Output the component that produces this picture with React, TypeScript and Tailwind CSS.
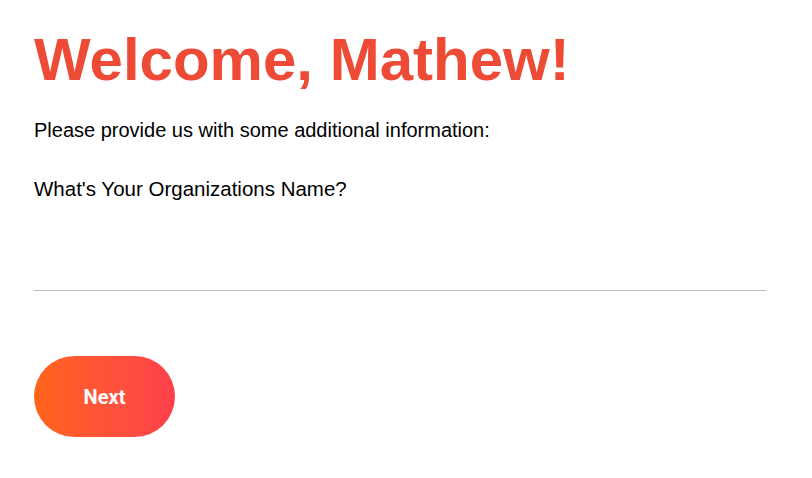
import { useState } from 'react'

export default function App() {
  const [orgName, setOrgName] = useState('')

  return (
    <div className="min-h-screen bg-white pl-[34px] pr-[46px] pt-[30px] font-['Liberation_Sans',Arial,sans-serif]">
      <h1 className="text-[60px] leading-[60px] font-bold text-[#ee4b37]">Welcome, Mathew!</h1>

      <p className="mt-[26px] text-[20px] leading-[28px] text-black">
        Please provide us with some additional information:
      </p>

      <label className="mt-[31px] block text-[20.5px] leading-[28px] text-black" htmlFor="org">
        What's Your Organizations Name?
      </label>

      {/* Underlined input */}
      <input
        id="org"
        value={orgName}
        onChange={(e) => setOrgName(e.target.value)}
        className="block h-[88px] w-full border-b border-[#bdbdbd] bg-transparent text-[20px] outline-none"
      />

      <button className="mt-[65px] flex h-[81px] w-[141px] items-center justify-center rounded-full bg-gradient-to-r from-[#ff6418] to-[#ff3f4a] font-['Roboto',sans-serif] text-[20px] font-bold text-white">
        Next
      </button>
    </div>
  )
}
